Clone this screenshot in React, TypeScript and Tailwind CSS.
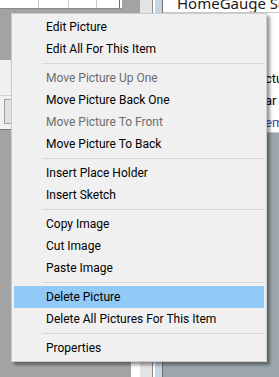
import React from "react";

type Item = { label: string; disabled?: boolean; active?: boolean } | "sep";

const items: Item[] = [
  { label: "Edit Picture" },
  { label: "Edit All For This Item" },
  "sep",
  { label: "Move Picture Up One", disabled: true },
  { label: "Move Picture Back One" },
  { label: "Move Picture To Front", disabled: true },
  { label: "Move Picture To Back" },
  "sep",
  { label: "Insert Place Holder" },
  { label: "Insert Sketch" },
  "sep",
  { label: "Copy Image" },
  { label: "Cut Image" },
  { label: "Paste Image" },
  "sep",
  { label: "Delete Picture", active: true },
  { label: "Delete All Pictures For This Item" },
  "sep",
  { label: "Properties" },
];

export default function App() {
  return (
    <div
      className="relative w-[279px] h-[377px] overflow-hidden bg-[#a3a3a3] flex"
      style={{ fontFamily: 'Roboto, "Noto Sans", sans-serif' }}
    >
      {/* left column */}
      <div className="w-[122px] shrink-0 flex flex-col">
        <div className="h-[9px] flex bg-white border-b border-[#8a8a8a]">
          <div className="w-[39px] border-r border-[#c8c8c8]" />
          <div className="w-[30px] border-r border-[#c8c8c8]" />
          <div className="w-[28px] border-r border-[#c8c8c8]" />
          <div className="w-[23px] border-r border-[#6a6a6a]" />
        </div>
        <div className="h-[51px]" />
        <div className="h-[70px] bg-[#f0f0f0] border-b border-[#7a7a7a] flex flex-col">
          <div className="h-[36px] border-b border-[#d0d0d0]" />
          <div className="mt-[3px] ml-[4px] w-[30px] h-[25px] border border-[#a0a0a0] bg-[#e1e1e1]" />
        </div>
      </div>
      {/* middle strips */}
      <div className="w-[18px] shrink-0 flex flex-col">
        <div className="flex-1" />
        <div className="h-[20px] ml-[9px] bg-white" />
      </div>
      <div className="w-[13px] shrink-0 bg-[#e4e4e4] border-r border-[#8c8c8c]" />
      <div className="w-[2px] shrink-0 bg-white" />
      <div className="w-[8px] shrink-0 bg-[#c6d4e6] border-r border-[#707070]" />
      {/* right panel */}
      <div className="flex-1 min-w-0 flex flex-col">
        <div className="h-[13px] bg-white border-b border-[#c8c8c8] overflow-hidden pl-[14px]">
          <div
            className="text-[15px] leading-[15px] mt-[-4px] text-[#1a1a1a] whitespace-nowrap"
            style={{ fontFamily: '"Noto Sans", sans-serif' }}
          >
            HomeGauge So
          </div>
        </div>
        <div className="h-[120px] bg-white border-b border-[#c8c8c8] overflow-hidden flex flex-col pt-[55px] pl-[102px] text-[13px] leading-[22px] text-black">
          <div className="whitespace-nowrap">ctu</div>
          <div className="whitespace-nowrap">ar</div>
          <div className="whitespace-nowrap text-[#1f4fa8]">em</div>
        </div>
        <div className="flex-1 bg-[#9ba6ac]" />
      </div>

      {/* context menu */}
      <div className="absolute left-[11px] top-[13px] w-[256px] bg-[#f0f0f0] border border-[#cccccc] shadow-[3px_3px_3px_rgba(0,0,0,0.4)] pt-[2px] pb-[2px] text-[12px]">
        {items.map((it, i) =>
          it === "sep" ? (
            <div key={i} className="h-[7px] flex items-center pl-[30px] pr-[2px]">
              <div className="h-px w-full bg-[#d7d7d7]" />
            </div>
          ) : (
            <div
              key={i}
              className={
                "h-[22px] mx-[2px] flex items-center pl-[32px] whitespace-nowrap " +
                (it.active ? "bg-[#91c9f7] " : "") +
                (it.disabled ? "text-[#6d6d6d]" : "text-black")
              }
            >
              {it.label}
            </div>
          )
        )}
      </div>
    </div>
  );
}
